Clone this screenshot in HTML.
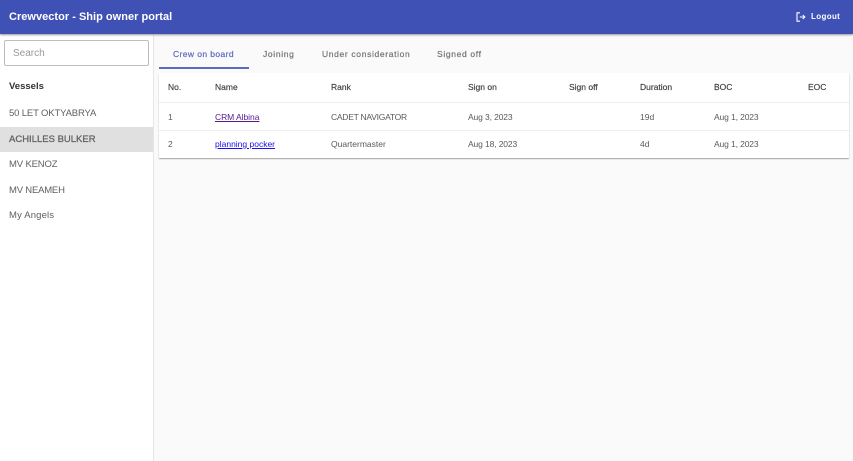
<!DOCTYPE html>
<html><head><meta charset="utf-8"><style>
html,body{margin:0;padding:0;width:853px;height:461px;overflow:hidden;background:#fafafa;font-family:"Liberation Sans",sans-serif}
div,a{position:absolute;white-space:nowrap}
.bar{left:0;top:0;width:853px;height:34px;background:#3f51b5;box-shadow:0 1px 2px rgba(0,0,0,.4)}
.side{left:0;top:35px;width:153px;height:426px;background:#fff;border-right:1px solid #e6e6e6}
.v{left:9px;font-size:9.5px;color:#5f5f5f;letter-spacing:-.15px;line-height:12px}
.t{font-size:8.5px;letter-spacing:.65px;color:#757575;top:49px;line-height:10px;-webkit-text-stroke:.2px #757575}
.h{font-size:8.5px;color:#3c3c3c;top:82px;line-height:10px;-webkit-text-stroke:.15px #3c3c3c}
.c{font-size:8.5px;color:#5a5a5a;line-height:10px}
.d{letter-spacing:-.12px}
.r1{top:112px}.r2{top:139px}
</style></head><body>
<div class="side"></div>
<div class="bar"></div>
<div style="left:9px;top:10px;font-size:11px;font-weight:bold;color:#fff;line-height:14px;letter-spacing:.02px">Crewvector - Ship owner portal</div>
<svg style="position:absolute;left:796px;top:12px" width="10" height="10" viewBox="0 0 10 10" fill="none" stroke="#fff" stroke-width="1.1"><path d="M4 .8H1v8.4h3M3.8 5h5M6.8 3l2 2-2 2"/></svg>
<div style="left:811px;top:12px;font-size:8px;font-weight:bold;color:#fff;letter-spacing:.35px;line-height:10px">Logout</div>
<div style="left:4px;top:40px;width:143px;height:24px;background:#fff;border:1px solid #bdbdbd;border-radius:2px"></div>
<div style="left:13px;top:48px;font-size:10px;color:#9a9a9a;line-height:12px">Search</div>
<div style="left:9px;top:81px;font-size:9.5px;font-weight:bold;color:#333;line-height:12px">Vessels</div>
<div class="v" style="top:108px">50 LET OKTYABRYA</div>
<div style="left:0;top:127px;width:153px;height:25px;background:#e0e0e0"></div>
<div class="v" style="top:134px;letter-spacing:0;-webkit-text-stroke:.25px #5f5f5f">ACHILLES BULKER</div>
<div class="v" style="top:159px">MV KENOZ</div>
<div class="v" style="top:185px;letter-spacing:-.2px">MV NEAMEH</div>
<div class="v" style="top:210px;letter-spacing:.15px">My Angels</div>
<div class="t" style="left:173px;color:#5c6bc0;-webkit-text-stroke:.2px #5c6bc0;letter-spacing:.4px">Crew on board</div>
<div class="t" style="left:263px">Joining</div>
<div class="t" style="left:322px">Under consideration</div>
<div class="t" style="left:437px">Signed off</div>
<div style="left:159px;top:67px;width:90px;height:2px;background:#5c6bc0"></div>
<div style="left:159px;top:73px;width:690px;height:85px;background:#fff;box-shadow:0 1px 1px rgba(0,0,0,.35)"></div>
<div style="left:159px;top:102px;width:690px;height:1px;background:#eee"></div>
<div style="left:159px;top:130px;width:690px;height:1px;background:#eee"></div>
<div class="h" style="left:168px">No.</div>
<div class="h" style="left:215px">Name</div>
<div class="h" style="left:331px">Rank</div>
<div class="h" style="left:468px">Sign on</div>
<div class="h" style="left:569px">Sign off</div>
<div class="h" style="left:640px">Duration</div>
<div class="h" style="left:714px">BOC</div>
<div class="h" style="left:808px">EOC</div>
<div class="c r1" style="left:168px">1</div>
<a class="c r1" style="left:215px;color:#551a8b;text-decoration:underline;letter-spacing:-.05px">CRM Albina</a>
<div class="c r1" style="left:331px;letter-spacing:-.25px">CADET NAVIGATOR</div>
<div class="c r1 d" style="left:468px">Aug 3, 2023</div>
<div class="c r1" style="left:640px">19d</div>
<div class="c r1 d" style="left:714px">Aug 1, 2023</div>
<div class="c r2" style="left:168px">2</div>
<a class="c r2" style="left:215px;color:#1a0dee;text-decoration:underline">planning pocker</a>
<div class="c r2" style="left:331px">Quartermaster</div>
<div class="c r2 d" style="left:468px">Aug 18, 2023</div>
<div class="c r2" style="left:640px">4d</div>
<div class="c r2 d" style="left:714px">Aug 1, 2023</div>
</body></html>
